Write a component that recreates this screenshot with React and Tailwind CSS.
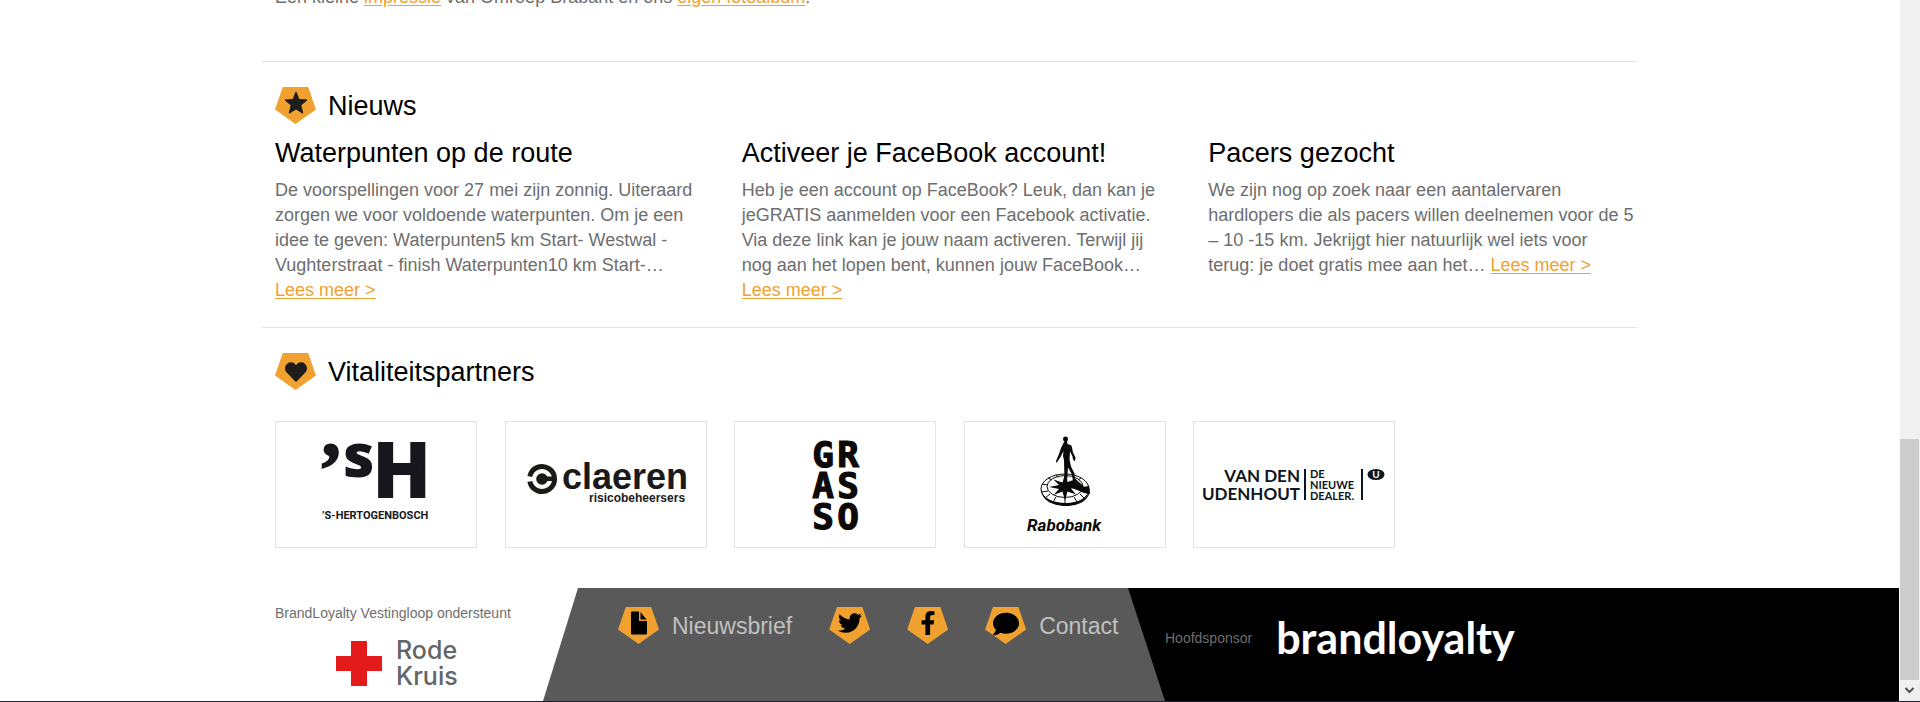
import React from "react";
import { FaHeart, FaTwitter, FaFacebookF, FaComment } from "react-icons/fa";

function Badge({ children }) {
  return (
    <span className="grid h-[37px] w-[41px] shrink-0 justify-items-center bg-[#f0a12f] pt-1 [clip-path:polygon(19%_0,81%_0,100%_61%,50%_100%,0_61%)]">
      {children}
    </span>
  );
}

function SectionTitle({ icon, children }) {
  return (
    <div className="flex items-center gap-3">
      <Badge>{icon}</Badge>
      <h2 className="text-[27px] leading-9 text-black">{children}</h2>
    </div>
  );
}

function MoreLink({ children }) {
  return (
    <a href="#" className="text-[#f0a12f] underline underline-offset-2">
      {children}
    </a>
  );
}

const news = [
  {
    title: "Waterpunten op de route",
    text: "De voorspellingen voor 27 mei zijn zonnig. Uiteraard zorgen we voor voldoende waterpunten. Om je een idee te geven: Waterpunten5 km Start- Westwal - Vughterstraat - finish Waterpunten10 km Start-…",
  },
  {
    title: "Activeer je FaceBook account!",
    text: "Heb je een account op FaceBook? Leuk, dan kan je jeGRATIS aanmelden voor een Facebook activatie. Via deze link kan je jouw naam activeren. Terwijl jij nog aan het lopen bent, kunnen jouw FaceBook…",
  },
  {
    title: "Pacers gezocht",
    text: "We zijn nog op zoek naar een aantalervaren hardlopers die als pacers willen deelnemen voor de 5 – 10 -15 km. Jekrijgt hier natuurlijk wel iets voor terug: je doet gratis mee aan het…",
  },
];

function DenBosch() {
  return (
    <svg viewBox="0 0 200 125" className="w-full fill-[#17161c]" role="img" aria-label="'s-Hertogenbosch">
      <text x="42" y="73" fontSize="76" stroke="#17161c" strokeWidth="2" className="font-['Liberation_Serif',serif] font-bold">’</text>
      <text x="67" y="55" fontSize="61" className="font-['Open_Sans',sans-serif] font-extrabold">s</text>
      <text x="99" y="75" fontSize="76" stroke="#17161c" strokeWidth="2" className="font-['Roboto',sans-serif] font-black">H</text>
      <text x="46" y="97" fontSize="11" className="font-['Roboto',sans-serif] font-bold">’S-HERTOGENBOSCH</text>
    </svg>
  );
}

function Claeren() {
  return (
    <svg viewBox="0 0 200 125" className="w-full fill-[#1a1a18]" role="img" aria-label="Claeren risicobeheersers">
      <path fill="none" stroke="#1a1a18" strokeWidth="5" d="M23.800 54.500a12.500 12.500 0 1 1 0 5" />
      <circle cx="36" cy="57" r="5.800" />
      <path d="M37 54.500h11v4.500H37z" />
      <text x="56" y="67" fontSize="36" className="font-['Liberation_Sans',sans-serif] font-bold">claeren</text>
      <text x="83" y="80" fontSize="12" className="font-['Liberation_Sans',sans-serif] font-bold">risicobeheersers</text>
    </svg>
  );
}

function Grasso() {
  return (
    <svg
      viewBox="0 0 200 125"
      className="w-full fill-[#0c0908] stroke-[#0c0908] font-['DejaVu_Sans_Mono',monospace] font-bold"
      role="img"
      aria-label="Grasso"
      fontSize="36"
      strokeWidth="1.200"
      textAnchor="middle"
    >
      <text x="88" y="45">G</text>
      <text x="113" y="45">R</text>
      <text x="88" y="76">A</text>
      <text x="113" y="76">S</text>
      <text x="88" y="107">S</text>
      <text x="113" y="107">O</text>
    </svg>
  );
}

function Rabobank() {
  return (
    <svg viewBox="0 0 200 125" className="w-full fill-[#0c0a08]" role="img" aria-label="Rabobank">
      <ellipse cx="100" cy="67" rx="24" ry="15" fill="none" stroke="#0c0a08" strokeWidth="1" />
      <path d="M76 67c0 11 12 17 25 17s24-6 24-17c-1 9-11 14-24 14s-24-5-25-14z" />
      <ellipse cx="100" cy="64.500" rx="18" ry="11" fill="none" stroke="#0c0a08" strokeWidth="1" />
      <path fill="none" stroke="#0c0a08" strokeWidth="1" d="M76 70l7-1M80 76l5-4M88 80l3-5M100 82v-6M112 80l-3-5M119 76l-4-4M77 62l6 1M83 56l4 2M91 52.500l2 3M116 56l-3 2" />
      <path d="M100 52l2.500 8 9-3-5 5.500 9.500 2.500-10 1.500 5 6-8.500-3-2.500 9-2.500-9-9 3.500 5.500-6-10-2 10-2-5.500-5.500 9 3z" />
      <path d="M109 58l8 7 7-1 1 8-6-1-7-3-8-3z" />
      <path d="M109 57l9 8" stroke="#0c0a08" strokeWidth="2" />
      <circle cx="100.500" cy="17" r="2.500" />
      <path d="M99.500 19h2.500l.5 3 4 1.500 1.500 7 2.500 5-.5 4-2-2-.500-3-2.500-5-.5 8 1.500 7 3.500 7 .500 7-2 1-1-7-4-7-1 15-2.500-.5-.500-22-1-4 .500-5-3 6-4 6-.500-2 3-7 2-6 1-2z" />
      <text x="62" y="109" fontSize="17" className="font-['Roboto',sans-serif] font-bold italic">Rabobank</text>
    </svg>
  );
}

function VanDenUdenhout() {
  return (
    <svg viewBox="0 0 200 125" className="w-full fill-[#0d1620] font-['Lato',sans-serif] font-bold" role="img" aria-label="Van den Udenhout, de nieuwe dealer">
      <text x="106" y="60" fontSize="17" textAnchor="end">VAN DEN</text>
      <text x="106" y="78" fontSize="17" textAnchor="end">UDENHOUT</text>
      <path d="M110 47h2v31h-2zM167 47h2v31h-2z" />
      <text x="116" y="56" fontSize="11">DE</text>
      <text x="116" y="67" fontSize="11">NIEUWE</text>
      <text x="116" y="78" fontSize="11">DEALER.</text>
      <ellipse cx="182" cy="52.500" rx="8.500" ry="5.500" />
      <text x="182" y="56" fontSize="10" fill="#fff" textAnchor="middle">U</text>
    </svg>
  );
}

const partners = [
  ["hertogenbosch", DenBosch],
  ["claeren", Claeren],
  ["grasso", Grasso],
  ["rabobank", Rabobank],
  ["udenhout", VanDenUdenhout],
];

function StarIcon() {
  return (
    <svg viewBox="0 0 24 24" className="size-6 fill-[#1d1d1b] stroke-[#1d1d1b]" strokeLinejoin="round" aria-hidden="true">
      <path d="M12 1l3 7.500 8 .5-6.200 5.200 2 8L12 18l-6.800 4.200 2-8L1 9l8-.5z" />
    </svg>
  );
}

function FileIcon() {
  return (
    <svg viewBox="0 0 16 24" className="h-6 w-4 fill-black" aria-hidden="true">
      <path d="M1 .5h7V10h8v12.500a1 1 0 0 1-1 1H1a1 1 0 0 1-1-1v-21a1 1 0 0 1 1-1z" />
      <path d="M9.500 1l6 7.500h-6z" />
    </svg>
  );
}

function FooterLink({ icon, label, hiddenLabel }) {
  return (
    <a href="#" aria-label={hiddenLabel} className="flex items-center gap-[13px] text-[23px] leading-9 text-[#c0c0c0]">
      <Badge>{icon}</Badge>
      {label}
    </a>
  );
}

function ScrollRail() {
  return (
    <div className="flex w-5 shrink-0 flex-col bg-[#f0f0f0] pr-px" aria-hidden="true">
      <div className="grow-[439]" />
      <div className="grow-[241] bg-[#cdcdcd]" />
      <svg viewBox="0 0 19 21" className="h-[21px] w-full fill-none stroke-[#505050] stroke-2">
        <path d="M5.500 8l4 4 4-4" />
      </svg>
    </div>
  );
}

export default function App() {
  return (
    <div className="flex min-h-screen flex-col overflow-hidden bg-white font-['Liberation_Sans',Arial,sans-serif] text-lg/[25px] text-[#6e6e6e]">
      <div className="flex grow">
        <div className="flex min-w-0 grow flex-col border-r border-white">
          <main className="mx-auto w-full max-w-[1375px] grow">
            <p className="-mt-[15px] mb-[51px] pl-[13px]">
              Een kleine <MoreLink>impressie</MoreLink> van Omroep Brabant en ons <MoreLink>eigen fotoalbum</MoreLink>!
            </p>

            <section className="border-t border-[#e3e3e3] pt-[25px] pb-6 pl-[13px]">
              <SectionTitle icon={<StarIcon />}>Nieuws</SectionTitle>
              <div className="mt-[11px] grid grid-cols-3 gap-[38px]">
                {news.map((item) => (
                  <article key={item.title}>
                    <h3 className="mb-[7px] text-[27px] leading-9 text-black">{item.title}</h3>
                    <p>
                      {item.text} <MoreLink>Lees&nbsp;meer&nbsp;&gt;</MoreLink>
                    </p>
                  </article>
                ))}
              </div>
            </section>

            <section className="border-t border-[#e3e3e3] pt-[25px] pb-10 pl-[13px]">
              <SectionTitle icon={<FaHeart className="mt-1 size-[22px] text-[#1d1d1b]" />}>Vitaliteitspartners</SectionTitle>
              <ul className="mt-[31px] flex max-w-[1120px] flex-wrap justify-between">
                {partners.map(([name, Logo]) => (
                  <li key={name} className="w-[202px] border border-[#e3e3e3]">
                    <a href="#" className="block">
                      <Logo />
                    </a>
                  </li>
                ))}
              </ul>
            </section>
          </main>

          <footer className="bg-linear-to-r from-white from-50% to-black to-50%">
            <div className="mx-auto flex w-full max-w-[1375px]">
              <div className="w-[281px] shrink-0 pt-4 pl-[13px] text-sm/[18px]">
                <p>BrandLoyalty Vestingloop ondersteunt</p>
                <div className="mt-[15px] flex items-center gap-[14px] pl-[61px]">
                  <svg viewBox="0 0 46 45" className="h-[45px] w-[46px] fill-[#e31b1a]" aria-hidden="true">
                    <path d="M15 0h16v15h15v15H31v15H15V30H0V15h15z" />
                  </svg>
                  <p className="font-['Inter',sans-serif] text-[25px] leading-[26px] font-medium text-[#636666]">
                    Rode
                    <br />
                    Kruis
                  </p>
                </div>
              </div>
              <nav className="flex min-h-[113px] w-[622px] shrink-0 items-start gap-[37px] bg-[#595959] pt-[19px] pl-[75px] [clip-path:polygon(35px_0,calc(100%-37px)_0,100%_100%,0_100%)]">
                <FooterLink icon={<FileIcon />} label="Nieuwsbrief" />
                <FooterLink icon={<FaTwitter className="size-6 text-black" />} hiddenLabel="Twitter" />
                <FooterLink icon={<FaFacebookF className="size-6 text-black" />} hiddenLabel="Facebook" />
                <FooterLink icon={<FaComment className="size-[26px] text-black" />} label="Contact" />
              </nav>
              <div className="flex grow items-start gap-6 pt-6">
                <p className="pt-[17px] text-sm/[18px]">Hoofdsponsor</p>
                <p className="font-['Lato',sans-serif] text-[43px] leading-[52px] font-bold text-white">brandloyalty</p>
              </div>
            </div>
          </footer>
        </div>
        <ScrollRail />
      </div>
      <div className="h-px bg-[#20222c]" />
    </div>
  );
}
